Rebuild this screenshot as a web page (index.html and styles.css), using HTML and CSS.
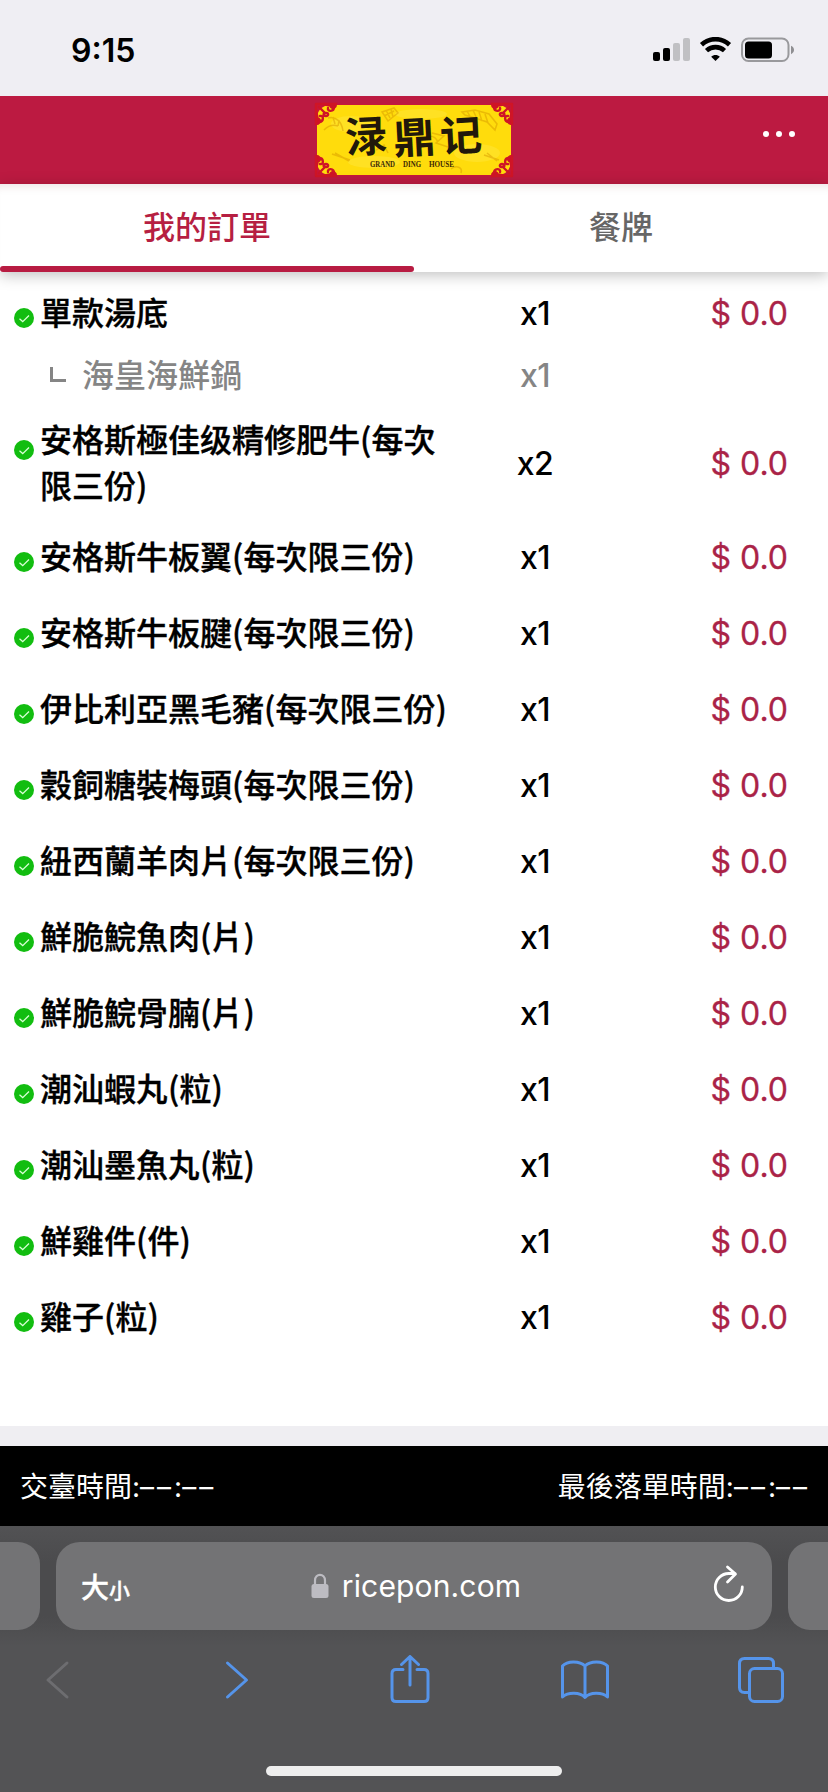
FILE: index.html
```html
<!DOCTYPE html>
<html lang="zh-Hant">
<head>
    <meta charset="UTF-8">
    <meta name="viewport" content="width=device-width, initial-scale=1.0">
    <title>我的訂單</title>
    <link rel="stylesheet" href="styles.css">
</head>
<body>
    <div class="status-bar">
        <span class="time">9:15</span>
        <svg class="status-icons" width="144" height="28" viewBox="0 0 144 28">
            <rect x="1" y="15" width="7" height="9" rx="2"/>
            <rect x="11" y="11" width="7" height="13" rx="2"/>
            <rect x="21" y="6" width="7" height="18" rx="2" fill="#c0c0c3"/>
            <rect x="31" y="1" width="7" height="23" rx="2" fill="#c0c0c3"/>
            <g fill="none" stroke="#000" stroke-width="4.6">
                <path d="M49.5 7.700C57.500 .3 69.500 .3 77.500 7.700"/>
                <path d="M54.500 13.600C59.700 8.900 67.300 8.900 72.500 13.600"/>
            </g>
            <path d="M63.500 24L59.200 19.700C61.500 17.300 65.500 17.300 67.800 19.700Z"/>
            <rect x="90" y="1.500" width="46.500" height="22.500" rx="6.500" fill="none" stroke="#99999c" stroke-width="2"/>
            <rect x="93" y="4.500" width="27" height="17" rx="3.500"/>
            <path d="M139 8.800C143 10.500 143 15.500 139 17.200Z" fill="#8f8f92"/>
        </svg>
    </div>

    <header class="header">
        <svg class="logo" width="196" height="72" viewBox="0 0 196 72">
            <defs>
                <g id="corner" fill="none" stroke="#cf1526" stroke-width="2.400" stroke-linecap="round">
                    <path d="M0 0H20C20 3 17 5 15 3M0 0V20C3 20 5 17 3 15" fill="#cf1526"/>
                    <path d="M18 3C18 8 11 8 12 4M3 18C8 18 8 11 4 12M3 3L9 9M9 9C13 8 13 12 10 12C7 12 7 9 9 9"/>
                </g>
            </defs>
            <rect width="196" height="72" fill="#c7173b"/>
            <rect x="1" y="1" width="194" height="70" rx="13" fill="#ffdc0c"/>
            <g fill="#fff06a" opacity=".25">
                <ellipse cx="35" cy="20" rx="20" ry="8"/>
                <ellipse cx="105" cy="10" rx="26" ry="5"/>
                <ellipse cx="58" cy="58" rx="26" ry="6"/>
                <ellipse cx="161" cy="49" rx="23" ry="9"/>
            </g>
            <g fill="none" stroke="#d99b00" stroke-width="1.500" opacity=".5">
                <path d="M66 8l12-4 4 5-10 8zM70 6l4 8M75 5l2 8M68 12l10-5"/>
                <path d="M146 8l13-2 14 4 8 10-2 6-8-8-12-4-10-3zM151 7l4 7M157 6l4 9M163 8l3 9M169 10l3 9"/>
                <path d="M12 14c8-2 14 4 15 13M17 13l2 7M23 16l-1 6M8 26c4-4 8-6 14-4"/>
                <path d="M16 50l18 6M19 49l14 8M168 51l15 5M171 49l10 8"/>
                <path d="M116 29l12 3-8 7 12 4M60 46l8-5 4 8M135 65c5-4 12-2 10 4M105 38c6-7 13-8 17 0"/>
            </g>
            <use href="#corner"/>
            <use href="#corner" transform="translate(196 0) scale(-1 1)"/>
            <use href="#corner" transform="translate(0 72) scale(1 -1)"/>
            <use href="#corner" transform="translate(196 72) scale(-1 -1)"/>
            <g class="logo-name">
                <text x="29" y="48" transform="rotate(-3 50 32)">渌</text>
                <text x="77" y="49" transform="rotate(-3 98 32)">鼎</text>
                <text x="124" y="47" transform="rotate(-3 145 32)">记</text>
            </g>
            <g class="logo-sub">
                <text x="54" y="63" textLength="25" lengthAdjust="spacingAndGlyphs">GRAND</text>
                <text x="87" y="63" textLength="18" lengthAdjust="spacingAndGlyphs">DING</text>
                <text x="113" y="63" textLength="25" lengthAdjust="spacingAndGlyphs">HOUSE</text>
            </g>
        </svg>
        <span class="more"><i></i><i></i><i></i></span>
    </header>

    <nav class="tabs">
        <div class="tab active">我的訂單</div>
        <div class="tab">餐牌</div>
    </nav>

    <main class="orders" id="orders"></main>

    <div class="notice">
        <span>交臺時間<b>:<i>––</i>:<i>––</i></b></span>
        <span>最後落單時間<b>:<i>––</i>:<i>––</i></b></span>
    </div>

    <div class="browser">
        <div class="address-row">
            <div class="side-card left"></div>
            <div class="address">
                <span class="text-size">大<small>小</small></span>
                <span class="host">
                    <svg width="18" height="26" viewBox="0 0 18 26">
                        <path d="M4 12V7.500C4 0 14 0 14 7.500V12" fill="none" stroke="#bdbcc2" stroke-width="2.200"/>
                        <rect x=".5" y="11" width="17" height="14" rx="2.500" fill="#bdbcc2"/>
                    </svg>
                    <span>ricepon.com</span>
                </span>
                <svg class="reload" width="32" height="38" viewBox="0 0 32 38" fill="none" stroke="#fff" stroke-width="2.800" stroke-linecap="round" stroke-linejoin="round">
                    <path d="M29.300 22A13.500 13.500 0 1 1 15.800 8.500H22M14.500 2L22.500 9L14.500 17"/>
                </svg>
            </div>
            <div class="side-card right"></div>
        </div>
        <div class="toolbar">
            <svg class="disabled" width="50" height="40" viewBox="0 0 24 40"><path d="M21 3L2 20L21 37"/></svg>
            <svg width="50" height="40" viewBox="-3 0 24 40"><path d="M2.500 3L21.500 20L2.500 37"/></svg>
            <svg width="50" height="50" viewBox="0 0 40 50"><path d="M13 14.500H6Q2 14.500 2 18.500V42.500Q2 46.500 6 46.500H34Q38 46.500 38 42.500V18.500Q38 14.500 34 14.500H27M20 30V1.800M11.500 9.500L20 1.500L28.500 9.500"/></svg>
            <svg width="50" height="42" viewBox="0 0 50 42"><path d="M25 7C20 1.500 7 1.500 2.500 7V38C8 33 20 33 25 38.500C30 33 42 33 47.500 38V7C43 1.500 30 1.500 25 7ZM25 7V38"/></svg>
            <svg width="50" height="48" viewBox="0 0 48 48"><path d="M12 36.500H7.500Q2.500 36.500 2.500 31.500V7.500Q2.500 2.500 7.500 2.500H31.500Q36.500 2.500 36.500 7.500V12"/><rect x="12.500" y="12.500" width="33" height="33" rx="5"/></svg>
        </div>
        <div class="home-indicator"></div>
    </div>

    <script src="orders.js"></script>
</body>
</html>
```
FILE: styles.css
```css
* {
    box-sizing: border-box;
}
body {
    margin: 0;
    width: 828px;
    height: 1792px;
    display: flex;
    flex-direction: column;
    overflow: hidden;
    background: #fff;
    font-family: Inter, "Noto Sans CJK TC", sans-serif;
    color: #000;
}
svg {
    display: block;
    flex: none;
}
.status-bar {
    height: 96px;
    padding: 4px 32px 0 71px;
    display: flex;
    align-items: center;
    justify-content: space-between;
    background: #efeef3;
}
.time {
    font-size: 32px;
    font-weight: 600;
    letter-spacing: 0;
}
.status-icons {
    margin-top: 2px;
}
.header {
    height: 88px;
    padding: 0 33px 0 316px;
    display: flex;
    align-items: center;
    justify-content: space-between;
    background: #bc1a41;
}
.logo {
    overflow: visible;
}
.logo-name {
    font-family: "Noto Sans CJK SC", sans-serif;
    font-size: 42px;
    font-weight: 700;
    fill: #21180b;
}
.logo-sub {
    font-family: "Liberation Serif", serif;
    font-size: 8px;
    font-weight: 700;
    fill: #3b2805;
}
.more {
    display: flex;
    gap: 7px;
    margin-bottom: 13px;
}
.more i {
    width: 6px;
    height: 6px;
    border-radius: 50%;
    background: #fff;
}
.tabs {
    height: 88px;
    display: flex;
    flex: none;
    box-shadow: 0 3px 14px rgba(0, 0, 0, 0.25), inset 0 10px 10px -8px rgba(90, 20, 40, 0.13);
}
.tab {
    flex: 1;
    padding-top: 17px;
    border-bottom: 6px solid transparent;
    text-align: center;
    font-family: "Noto Sans CJK TC", sans-serif;
    font-size: 32px;
    line-height: 48px;
    font-weight: 500;
    color: #666;
}
.tab.active {
    position: relative;
    color: #b61f42;
}
.tab.active::after {
    content: "";
    position: absolute;
    left: 0;
    right: 0;
    bottom: -6px;
    height: 6px;
    border-radius: 3px;
    background: #b81c42;
}
.orders {
    height: 1154px;
    padding-top: 3px;
    flex: none;
}
.row {
    display: grid;
    grid-template-columns: 460px 150px 1fr;
    align-items: center;
    padding: 15px 0;
    font-size: 32px;
    line-height: 46px;
    font-weight: 500;
}
.row.tall {
    padding: 10px 0;
}
.dish {
    display: flex;
    padding-left: 14px;
    font-family: "Noto Sans CJK TC", sans-serif;
}
.tick {
    margin: 18px 6px 0 0;
}
.tall .tick {
    margin-top: 23px;
}
.dish-name {
    width: 414px;
    margin: -2px 0 2px;
    -webkit-text-stroke: 0.35px #000;
}
.count {
    margin: 1px 0 -1px;
    text-align: center;
    letter-spacing: -0.5px;
}
.price {
    margin: 1px 0 -1px;
    padding-right: 40px;
    text-align: right;
    font-weight: 400;
    color: #aa2347;
    -webkit-text-stroke: 0.3px #aa2347;
}
.row.extra {
    padding: 1px 0 9px;
    color: #858585;
}
.extra .dish {
    padding-left: 50px;
}
.extra-name {
    margin: -2px 0 2px;
}
.branch {
    width: 16px;
    height: 15px;
    margin: 15px 16px 0 0;
    border-left: 3px solid #858585;
    border-bottom: 3px solid #858585;
}
.notice {
    height: 100px;
    flex: none;
    padding: 0 18px 3px 20px;
    border-top: 20px solid #efeef2;
    display: flex;
    align-items: center;
    justify-content: space-between;
    background: #000;
    color: #fff;
    font-family: "Noto Sans CJK TC", sans-serif;
    font-size: 28px;
}
.notice b {
    font-family: Inter, sans-serif;
    font-weight: 400;
}
.notice i {
    font-style: normal;
    letter-spacing: 3px;
}
.browser {
    height: 266px;
    flex: none;
    background: #535355;
}
.address-row {
    display: flex;
    justify-content: space-between;
    padding-top: 16px;
    background: linear-gradient(#525254, #4b4b4d 30%, #4b4b4d 75%, #535355);
    height: 120px;
}
.side-card,
.address {
    height: 88px;
    background: #737375;
}
.side-card {
    width: 40px;
}
.side-card.left {
    border-radius: 0 22px 22px 0;
}
.side-card.right {
    border-radius: 22px 0 0 22px;
}
.address {
    width: 716px;
    padding: 0 27px 0 25px;
    border-radius: 24px;
    display: flex;
    align-items: center;
    justify-content: space-between;
    color: #fff;
}
.text-size {
    font-family: "Noto Sans CJK TC", sans-serif;
    font-size: 28px;
    font-weight: 500;
    -webkit-text-stroke: 0.4px #fff;
}
.text-size small {
    font-size: 21px;
}
.host {
    display: flex;
    align-items: center;
    gap: 13px;
    margin-right: 11px;
    font-size: 30px;
    letter-spacing: 0.15px;
}
.reload {
    margin-bottom: 4px;
}
.toolbar {
    height: 68px;
    padding: 0 42px 0 33px;
    display: flex;
    align-items: center;
    justify-content: space-between;
}
.toolbar svg {
    fill: none;
    stroke: #5594ea;
    stroke-width: 3;
    stroke-linecap: round;
    stroke-linejoin: round;
}
.toolbar .disabled {
    stroke: #6d6d70;
}
.home-indicator {
    width: 296px;
    height: 10px;
    margin: 52px auto 0;
    border-radius: 5px;
    background: #eee;
}
```
FILE: orders.js
```js
const orders = [
    { name: '單款湯底', count: 1, extra: '海皇海鮮鍋' },
    { name: '安格斯極佳级精修肥牛(每次限三份)', count: 2, tall: true },
    { name: '安格斯牛板翼(每次限三份)', count: 1 },
    { name: '安格斯牛板腱(每次限三份)', count: 1 },
    { name: '伊比利亞黑毛豬(每次限三份)', count: 1 },
    { name: '穀飼糖裝梅頭(每次限三份)', count: 1 },
    { name: '紐西蘭羊肉片(每次限三份)', count: 1 },
    { name: '鮮脆鯇魚肉(片)', count: 1 },
    { name: '鮮脆鯇骨腩(片)', count: 1 },
    { name: '潮汕蝦丸(粒)', count: 1 },
    { name: '潮汕墨魚丸(粒)', count: 1 },
    { name: '鮮雞件(件)', count: 1 },
    { name: '雞子(粒)', count: 1 }
];

const tick = `<svg class="tick" width="20" height="20" viewBox="0 0 20 20">
    <circle cx="10" cy="10" r="10" fill="#12bd10"/>
    <path d="M5.500 10.800L8.700 13.600L15 7.500" fill="none" stroke="#d9ffd4" stroke-width="1.300"/>
</svg>`;

document.getElementById('orders').innerHTML = orders.map(order => `
    <div class="row ${order.tall ? 'tall' : ''}">
        <div class="dish">${tick}<span class="dish-name">${order.name}</span></div>
        <div class="count">x${order.count}</div>
        <div class="price">$ 0.0</div>
    </div>
    ${order.extra ? `
    <div class="row extra">
        <div class="dish"><span class="branch"></span><span class="extra-name">${order.extra}</span></div>
        <div class="count">x${order.count}</div>
    </div>` : ''}
`).join('');
```
